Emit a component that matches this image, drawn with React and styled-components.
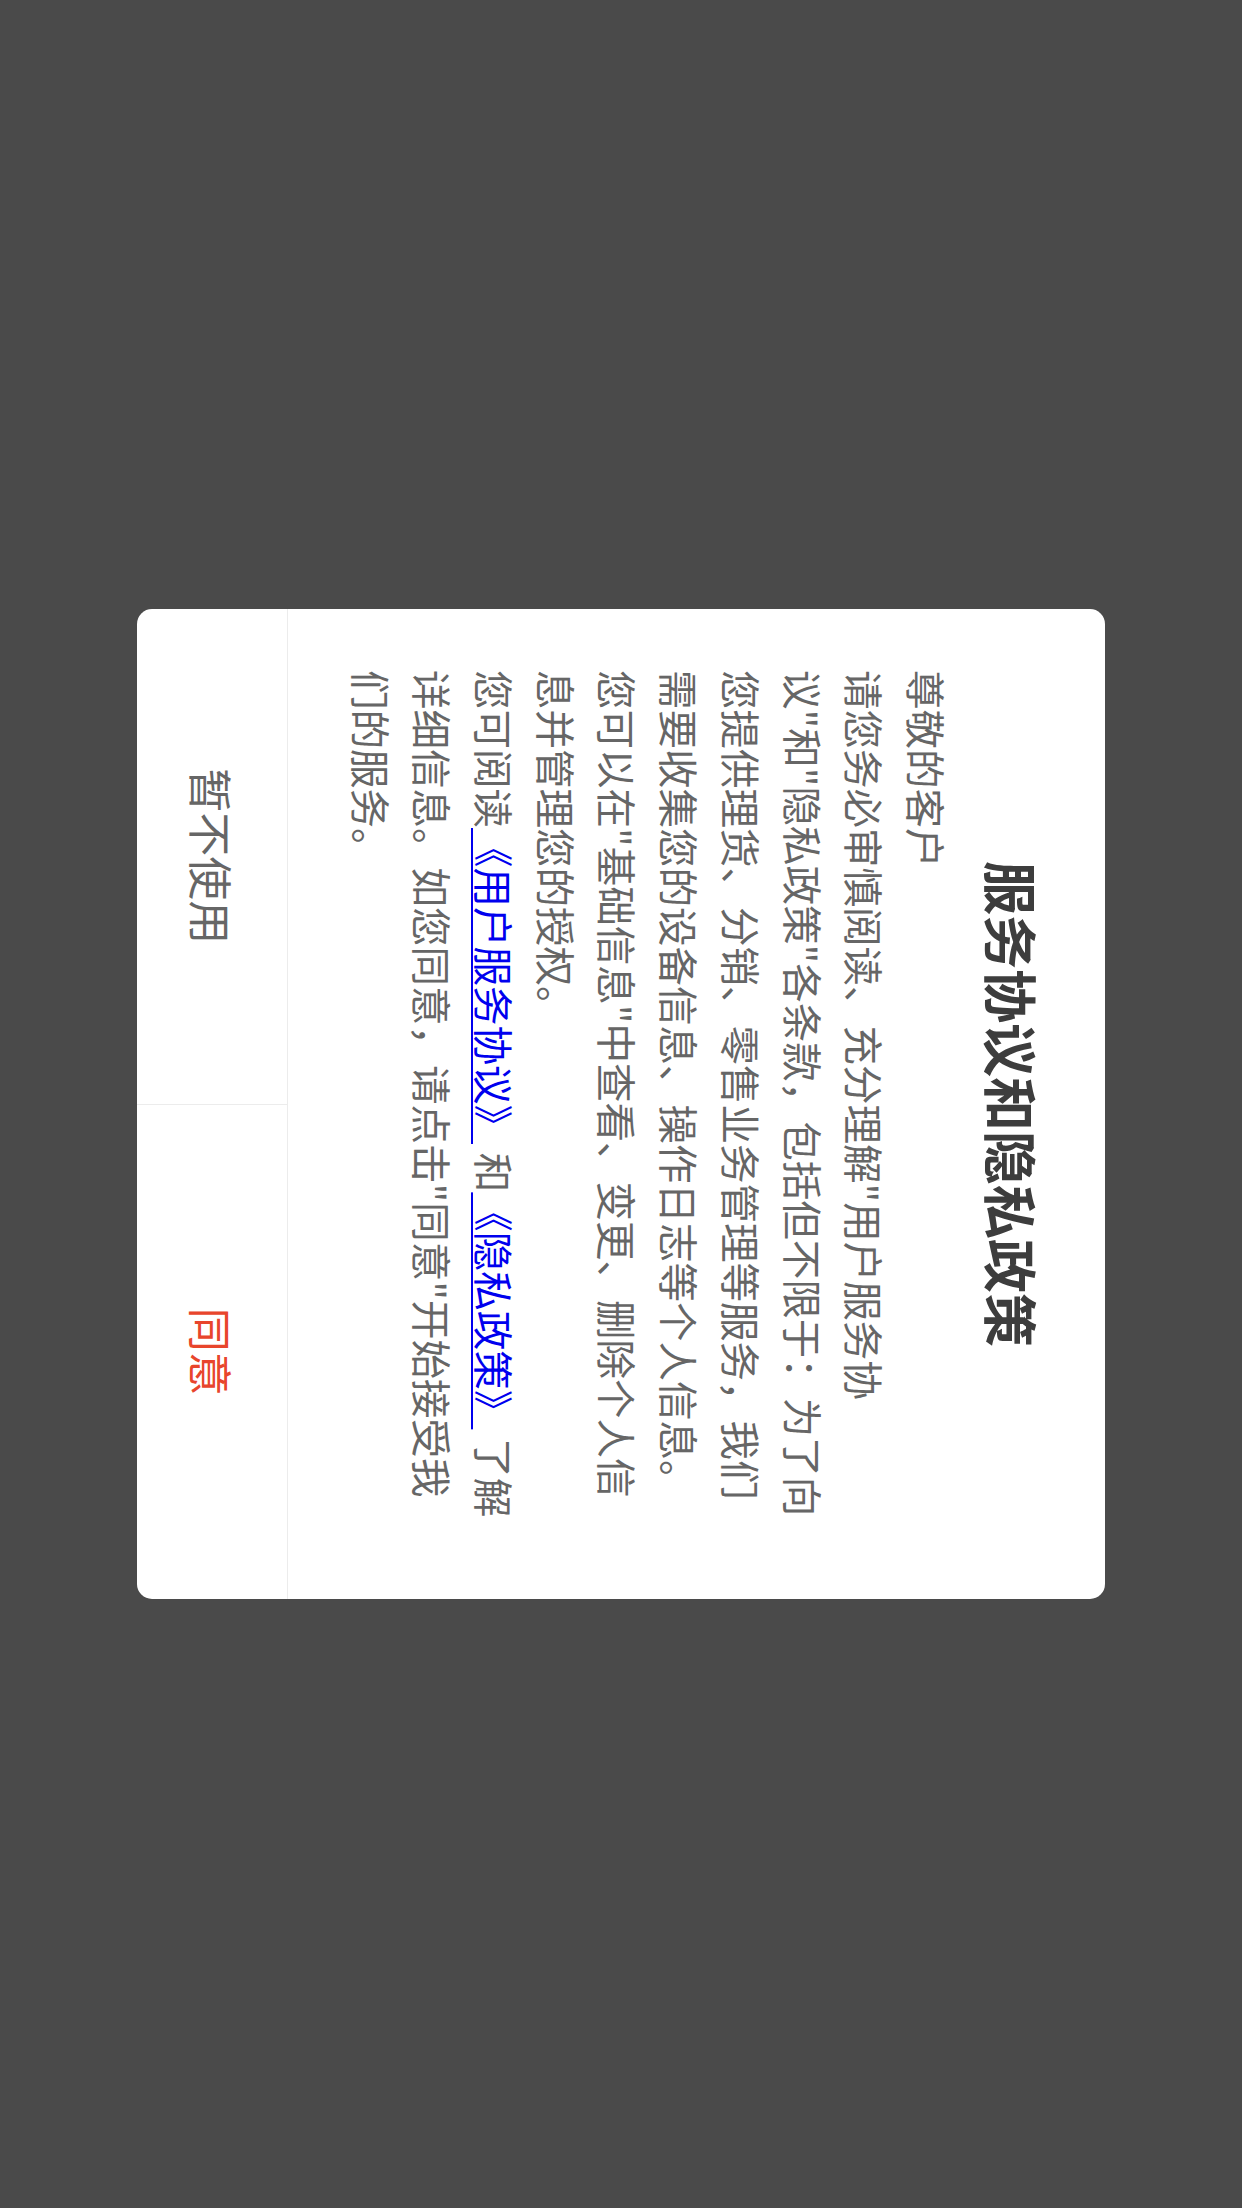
import React from "react";
import styled, { createGlobalStyle } from "styled-components";

const GlobalStyle = createGlobalStyle`
  html, body {
    margin: 0;
    padding: 0;
    background: #4a4a4a;
  }
  body {
    font-family: "Noto Sans CJK SC", "Noto Sans", sans-serif;
  }
`;

const Screen = styled.div`
  width: 1242px;
  height: 2208px;
  background: #4a4a4a;
  display: flex;
  align-items: center;
  justify-content: center;
  overflow: hidden;
`;

// the whole dialog is drawn upright, then turned a quarter turn clockwise
const Dialog = styled.div`
  flex: none;
  width: 990px;
  height: 968px;
  background: #fff;
  border-radius: 15px;
  display: flex;
  flex-direction: column;
  transform: rotate(90deg);
  overflow: hidden;
`;

const Title = styled.h2`
  margin: 0;
  padding-top: 60px;
  height: 66px;
  line-height: 66px;
  text-align: center;
  font-size: 54px;
  font-weight: 700;
  color: #3d3d3d;
`;

const Body = styled.div`
  flex: 1;
  margin-top: 21px;
  padding-left: 61px;
  width: 856px;
  font-size: 39.5px;
  line-height: 61.7px;
  color: #666;
`;

const Para = styled.p`
  margin: 0;
`;

const Link = styled.a`
  color: #0000ee;
  text-decoration: underline;
  text-decoration-thickness: 2px;
  text-underline-offset: 5px;
`;

const Buttons = styled.div`
  display: flex;
  height: 150px;
  border-top: 1px solid #ececec;
`;

const Button = styled.div`
  flex: 1;
  display: flex;
  align-items: center;
  justify-content: center;
  font-size: 44px;
  color: ${(p) => (p.primary ? "#e8452c" : "#666")};
  & + & {
    border-left: 1px solid #ececec;
  }
`;

const App = () => {
  return (
    <Screen>
      <GlobalStyle />
      <Dialog>
        <Title>服务协议和隐私政策</Title>
        <Body>
          <Para>尊敬的客户</Para>
          <Para>
            请您务必审慎阅读、充分理解"用户服务协议"和"隐私政策"各条款，包括但不限于：为了向您提供理货、分销、零售业务管理等服务，我们需要收集您的设备信息、操作日志等个人信息。您可以在"基础信息"中查看、变更、删除个人信息并管理您的授权。
          </Para>
          <Para>
            您可阅读<Link href="#">《用户服务协议》</Link> 和<Link href="#">《隐私政策》</Link> 了解详细信息。如您同意，请点击"同意"开始接受我们的服务。
          </Para>
        </Body>
        <Buttons>
          <Button>暂不使用</Button>
          <Button primary>同意</Button>
        </Buttons>
      </Dialog>
    </Screen>
  );
};

export default App;
